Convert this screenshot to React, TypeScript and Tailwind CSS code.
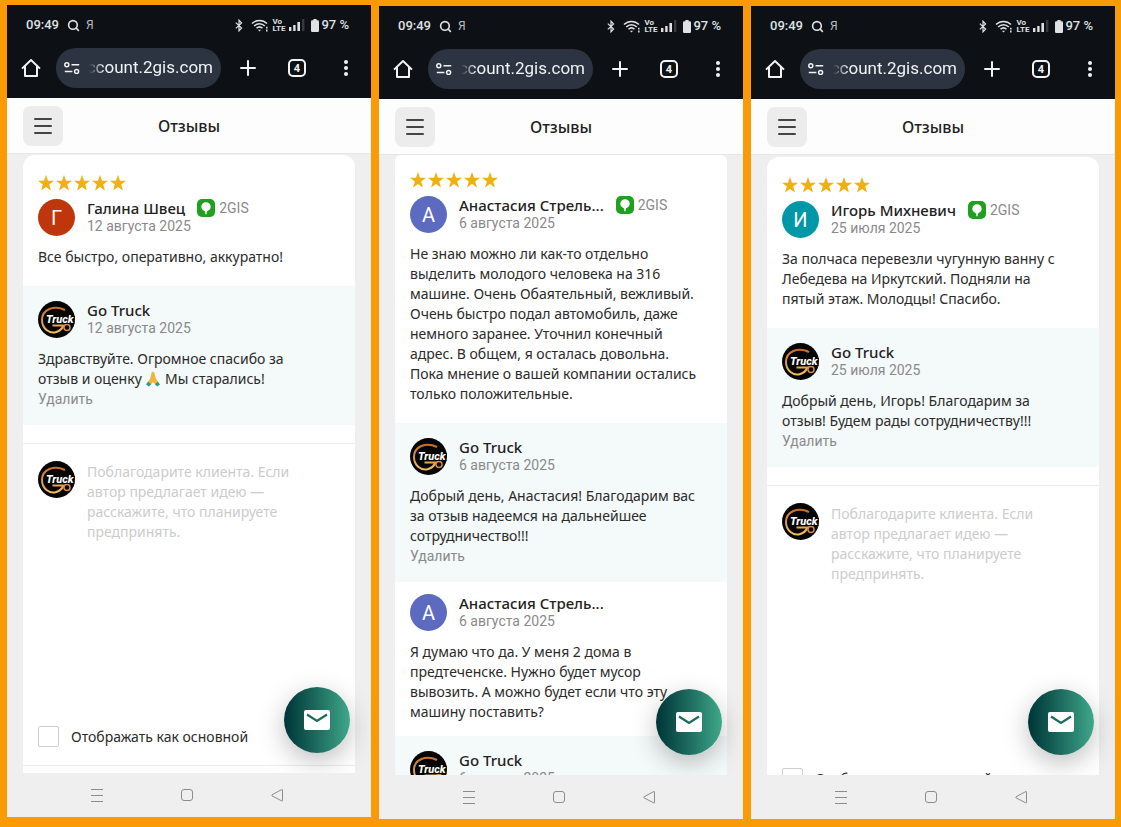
import { useId, type ReactNode } from "react";
import { Menu, Plus, Search } from "lucide-react";

const REPLY_HINT =
  "Поблагодарите клиента. Если\nавтор предлагает идею —\nрасскажите, что планируете\nпредпринять.";

function StatusBar() {
  return (
    <div className="flex h-10 items-center pl-[19px] pr-[22px] font-['Roboto'] text-[13px] font-medium text-[#dfe1e3]">
      <span>09:49</span>
      <Search className="ml-2 h-[13px] w-[13px]" strokeWidth={3} />
      <span className="ml-[6px] text-xs font-normal text-[#b9bcc0]">Я</span>
      <div className="ml-auto flex items-center">
        <svg viewBox="0 0 8 13" className="h-[13px] w-2" fill="none" stroke="currentColor" strokeWidth="1.2">
          <path d="M.8 3.6 6.6 9 4 11.8V1.2L6.6 4 .8 9.4" />
        </svg>
        <svg viewBox="0 0 18 13" className="ml-2 h-[13px] w-[18px]" fill="none" stroke="currentColor" strokeWidth="1.5">
          <path d="M1 4.6C5.2.3 11.8.3 16 4.6M3.2 7C6.3 3.9 10.7 3.9 13.8 7M5.5 9.3c1.8-1.7 4.2-1.7 6 0" />
          <path d="M8.5 12.4 6.9 10.8h3.2z" fill="currentColor" stroke="none" />
          <path d="M15.8 7.8v1.8M15.8 10.6v1.8" />
        </svg>
        <span className="ml-1 flex flex-col text-[8px] font-bold leading-[7px]">
          <span>Vo</span>
          <span>LTE</span>
        </span>
        <svg viewBox="0 0 16 12" className="ml-1 h-3 w-4" fill="currentColor">
          <path d="M0 8h2.4v4H0zM4.2 6h2.4v6H4.2zM8.4 3h2.6v9H8.4z" />
          <path d="M13 0h2.4v12H13z" opacity=".2" />
        </svg>
        <svg viewBox="0 0 8 13" className="ml-[6px] h-[13px] w-2" fill="currentColor">
          <path d="M2.4 0h3.2v1.2h1.2Q8 1.2 8 2.4v9.4Q8 13 6.8 13H1.2Q0 13 0 11.8V2.4Q0 1.2 1.2 1.2h1.2z" />
        </svg>
        <span className="ml-[2px]">97 %</span>
      </div>
    </div>
  );
}

function BrowserBar() {
  return (
    <div className="flex h-[53px] items-start pl-[13px] pr-[22px] pt-[3px] text-[#f1f3f5]">
      <button aria-label="Домой" className="flex h-10 w-[22px] items-center justify-center">
        <svg viewBox="0 0 20 20" className="h-5 w-5" fill="none" stroke="currentColor" strokeWidth="2">
          <path d="M1 10.6 10 2l9 8.6M4 8.2V18h12V8.2" strokeLinejoin="round" />
        </svg>
      </button>
      <button className="ml-[14px] flex h-10 min-w-0 flex-1 items-center rounded-full bg-[#2b3440] pl-2 pr-2">
        <svg viewBox="0 0 16 12" className="h-3 w-4 shrink-0" fill="none" stroke="currentColor" strokeWidth="1.5">
          <circle cx="2.8" cy="2.8" r="2" />
          <path d="M7.5 2.8h7.7M.8 9.4h7.6" />
          <circle cx="12.6" cy="9.4" r="2" />
        </svg>
        <span className="ml-[9px] flex min-w-0 flex-1 justify-end overflow-hidden mask-l-from-88% font-['Roboto'] text-[17px]">
          account.2gis.com
        </span>
      </button>
      <button aria-label="Новая вкладка" className="ml-[18px] flex h-10 w-[18px] items-center justify-center">
        <Plus className="h-6 w-6 shrink-0" strokeWidth={2} />
      </button>
      <button aria-label="Вкладки" className="ml-[31px] flex h-10 w-5 items-center">
        <span className="flex h-[18px] w-[18px] items-center justify-center rounded-[5px] border-2 border-current font-['Roboto'] text-[11px] font-bold leading-none">
          4
        </span>
      </button>
      <button aria-label="Меню браузера" className="ml-[35px] flex h-10 w-[6px] flex-col items-center justify-center gap-[2px]">
        <i className="h-1 w-1 rounded-full bg-current" />
        <i className="h-1 w-1 rounded-full bg-current" />
        <i className="h-1 w-1 rounded-full bg-current" />
      </button>
    </div>
  );
}

function PageHeader() {
  return (
    <header className="grid h-14 shrink-0 grid-cols-[40px_1fr_40px] items-center border-b border-[#e6e6e6] bg-[#fcfdfc] px-4">
      <button aria-label="Меню" className="flex h-10 w-10 items-center justify-center rounded-lg bg-[#ececec] text-[#444]">
        <Menu className="h-6 w-6" strokeWidth={2} />
      </button>
      <h1 className="text-center text-base font-medium text-[#1f1f1f]">Отзывы</h1>
    </header>
  );
}

function Stars() {
  return (
    <div className="mb-2 flex gap-[2px] text-[#efb011]" role="img" aria-label="5 из 5">
      {[1, 2, 3, 4, 5].map((n) => (
        <svg key={n} viewBox="0 0 16 16" className="h-4 w-4" fill="currentColor">
          <path d="M8 0l2 5.7 6 .1-4.800 3.700 1.750 5.900L8 11.900l-4.950 3.500 1.750-5.900L0 5.800l6-.1z" />
        </svg>
      ))}
    </div>
  );
}

function TruckLogo() {
  const id = useId();
  return (
    <svg viewBox="0 0 37 37" className="h-[37px] w-[37px] shrink-0">
      <defs>
        <linearGradient id={id} x1="0" y1="0" x2="0" y2="1">
          <stop offset="0" stopColor="#c8702a" />
          <stop offset="1" stopColor="#f0bd62" />
        </linearGradient>
      </defs>
      <circle cx="18.500" cy="18.500" r="18.500" fill="#050505" />
      <path
        d="M27 9C16 3.500 4 8.500 4 19c0 9 7.500 13.500 13.500 12.200 4-.8 6.500-3.200 8-6.700H14.500"
        fill="none"
        stroke={`url(#${id})`}
        strokeWidth="2"
      />
      <circle cx="29" cy="26.500" r="3" fill="none" stroke="#d98b4a" strokeWidth="1.500" />
      <text
        x="8"
        y="22"
        fill="#fff"
        stroke="#050505"
        strokeWidth="2"
        paintOrder="stroke"
        fontFamily="Roboto"
        fontSize="11"
        fontWeight="800"
        fontStyle="italic"
      >
        Truck
      </text>
    </svg>
  );
}

function LetterAvatar({ letter, color }: { letter: string; color: string }) {
  return (
    <div
      className="flex h-[37px] w-[37px] shrink-0 items-center justify-center rounded-full font-['Roboto'] text-xl text-white"
      style={{ backgroundColor: color }}
    >
      {letter}
    </div>
  );
}

function GisBadge() {
  return (
    <span className="ml-3 flex items-center gap-1 font-['Roboto'] text-sm font-normal text-[#8a8a8a]">
      <svg viewBox="0 0 18 18" className="h-[18px] w-[18px]">
        <rect width="18" height="18" rx="5" fill="#1fa01f" />
        <path d="M9 3.200a4.700 4.700 0 0 1 4.700 4.700c0 2.500-2.200 3.300-3.400 4.300-.6.500-.6 1.600-.7 3.100H8.400c-.1-1.500-.1-2.600-.7-3.100-1.200-1-3.400-1.800-3.400-4.300A4.700 4.700 0 0 1 9 3.200z" fill="#fff" />
      </svg>
      2GIS
    </span>
  );
}

interface AuthorProps {
  avatar: ReactNode;
  name: string;
  date: string;
  badge?: boolean;
}

function Author({ avatar, name, date, badge }: AuthorProps) {
  return (
    <div className="mb-[11px] flex h-[37px] gap-3">
      {avatar}
      <div>
        <div className="flex h-[18px] items-center whitespace-nowrap text-[15px] font-medium text-[#222]">
          {name}
          {badge && <GisBadge />}
        </div>
        <p className="font-['Roboto'] text-sm leading-[18px] text-[#8a8a8a]">{date}</p>
      </div>
    </div>
  );
}

function Body({ children }: { children: ReactNode }) {
  return <p className="whitespace-pre text-sm leading-5 text-[#2b2b2b]">{children}</p>;
}

function Reply({ date, children }: { date: string; children: ReactNode }) {
  return (
    <section className="bg-[#f4f9f9] px-[15px] pb-4 pt-[15px]">
      <Author avatar={<TruckLogo />} name="Go Truck" date={date} />
      <Body>{children}</Body>
      <button className="block font-['Roboto'] text-sm leading-5 text-[#8a8a8a]">Удалить</button>
    </section>
  );
}

function ReplyForm() {
  const id = useId();
  return (
    <form className="mt-[18px] border-t border-[#ececec] px-[15px] pt-[17px]">
      <div className="flex gap-3">
        <TruckLogo />
        <textarea
          aria-label="Ответ на отзыв"
          placeholder={REPLY_HINT}
          className="mt-px h-[248px] min-w-0 flex-1 resize-none text-sm leading-5 outline-none placeholder:text-[#cccccc]"
        />
      </div>
      <div className="mt-4 flex items-center gap-3">
        <input
          id={id}
          type="checkbox"
          className="h-[21px] w-[21px] appearance-none rounded-xs border border-[#cfcfcf] bg-white"
        />
        <label htmlFor={id} className="text-sm text-[#2b2b2b]">
          Отображать как основной
        </label>
      </div>
      <div className="-mx-[15px] mt-[18px] h-5 border-t border-[#ececec]" />
    </form>
  );
}

function PrayingHands() {
  return (
    <svg viewBox="0 0 16 16" className="inline h-4 w-4 align-[-3px]" role="img" aria-label="🙏">
      <path d="M7.700.5c-.8 0-1 .8-1.200 1.700L5.200 7.400 3 11l2.200 3 2.500-2.500zM8.300.5c.8 0 1 .8 1.200 1.700l1.300 5.200L13 11l-2.200 3-2.500-2.500z" fill="#f9b52b" />
      <path d="M8 1.500v9.500" stroke="#d98a1c" strokeWidth=".7" />
      <path d="M3.200 10.500 1 13.500l3 2 2-2.200zM12.800 10.500l2.200 3-3 2-2-2.200z" fill="#2b9a97" />
    </svg>
  );
}

function SystemNav() {
  return (
    <nav className="flex h-11 shrink-0 items-center justify-between bg-[#efefef] pl-[83px] pr-[87px] text-[#8c8c8c]">
      <button aria-label="Недавние">
        <svg viewBox="0 0 14 14" className="h-[14px] w-[14px]" stroke="currentColor">
          <path d="M1 1.500h12M1 7.500h12M1 13.500h12" />
        </svg>
      </button>
      <button aria-label="Главный экран">
        <svg viewBox="0 0 14 14" className="h-[14px] w-[14px]" fill="none" stroke="currentColor">
          <rect x="1.500" y="1.500" width="11" height="11" rx="2.500" />
        </svg>
      </button>
      <button aria-label="Назад">
        <svg viewBox="0 0 14 14" className="h-[14px] w-[14px]" fill="none" stroke="currentColor">
          <path d="M12.500 2v10.500q0 .8-.8.400L2 7.800q-.8-.5 0-1L11.700 1.600q.8-.4.800.4z" />
        </svg>
      </button>
    </nav>
  );
}

function Phone({ className, children }: { className: string; children: ReactNode }) {
  return (
    <div className={`flex min-h-0 min-w-0 flex-col overflow-hidden bg-[#efefef] ${className}`}>
      <div className="shrink-0 bg-[#0d1115]">
        <StatusBar />
        <BrowserBar />
      </div>
      <PageHeader />
      <div className="relative min-h-0 flex-1 overflow-hidden">
        <main className="h-full overflow-hidden px-4">{children}</main>
        <button
          aria-label="Написать сообщение"
          className="absolute bottom-5 right-[21px] flex h-[66px] w-[66px] items-center justify-center rounded-full bg-linear-to-r from-[#003537] to-[#3fa88a] shadow-[0_8px_26px_rgba(0,0,0,0.25)]"
        >
          <svg viewBox="0 0 26 20" className="h-5 w-[26px]">
            <rect width="26" height="20" rx="2" fill="#fff" />
            <path d="M3 4.500 13 11 23 4.500" fill="none" stroke="#1b6b5c" strokeWidth="2.200" />
          </svg>
        </button>
      </div>
      <SystemNav />
    </div>
  );
}

export default function App() {
  return (
    <div className="grid h-screen grid-cols-3 grid-rows-[minmax(0,1fr)] gap-2 bg-[#fa9b06] pb-2 pl-[7px] pr-[6px] pt-[5px] font-['Noto_Sans',sans-serif]">
      <Phone className="mb-[2px]">
        <article className="mt-px min-h-full rounded-t-xl bg-white">
          <div className="px-[15px] pb-[19px] pt-5">
            <Stars />
            <Author avatar={<LetterAvatar letter="Г" color="#bf360c" />} name="Галина Швец" date="12 августа 2025" badge />
            <Body>Все быстро, оперативно, аккуратно!</Body>
          </div>
          <Reply date="12 августа 2025">
            Здравствуйте. Огромное спасибо за{"\n"}отзыв и оценку <PrayingHands /> Мы старались!
          </Reply>
          <ReplyForm />
        </article>
      </Phone>

      <Phone className="mt-px">
        <article className="min-h-full rounded-t-md bg-white">
          <div className="px-[15px] pb-[19px] pt-[17px]">
            <Stars />
            <Author avatar={<LetterAvatar letter="А" color="#5c6bc0" />} name="Анастасия Стрель..." date="6 августа 2025" badge />
            <Body>
              {`Не знаю можно ли как-то отдельно
выделить молодого человека на 316
машине. Очень Обаятельный, вежливый.
Очень быстро подал автомобиль, даже
немного заранее. Уточнил конечный
адрес. В общем, я осталась довольна.
Пока мнение о вашей компании остались
только положительные.`}
            </Body>
          </div>
          <Reply date="6 августа 2025">
            {`Добрый день, Анастасия! Благодарим вас
за отзыв надеемся на дальнейшее
сотрудничество!!!`}
          </Reply>
          <div className="px-[15px] pb-[14px] pt-3">
            <Author avatar={<LetterAvatar letter="А" color="#5c6bc0" />} name="Анастасия Стрель..." date="6 августа 2025" />
            <Body>
              {`Я думаю что да. У меня 2 дома в
предтеченске. Нужно будет мусор
вывозить. А можно будет если что эту
машину поставить?`}
            </Body>
          </div>
          <Reply date="6 августа 2025">Хорошо, спасибо!</Reply>
        </article>
      </Phone>

      <Phone className="mt-px">
        <article className="mt-[2px] min-h-full rounded-t-xl bg-white">
          <div className="px-[15px] pb-[19px] pt-5">
            <Stars />
            <Author avatar={<LetterAvatar letter="И" color="#0097a7" />} name="Игорь Михневич" date="25 июля 2025" badge />
            <Body>
              {`За полчаса перевезли чугунную ванну с
Лебедева на Иркутский. Подняли на
пятый этаж. Молодцы! Спасибо.`}
            </Body>
          </div>
          <Reply date="25 июля 2025">
            {`Добрый день, Игорь! Благодарим за
отзыв! Будем рады сотрудничеству!!!`}
          </Reply>
          <ReplyForm />
        </article>
      </Phone>
    </div>
  );
}
